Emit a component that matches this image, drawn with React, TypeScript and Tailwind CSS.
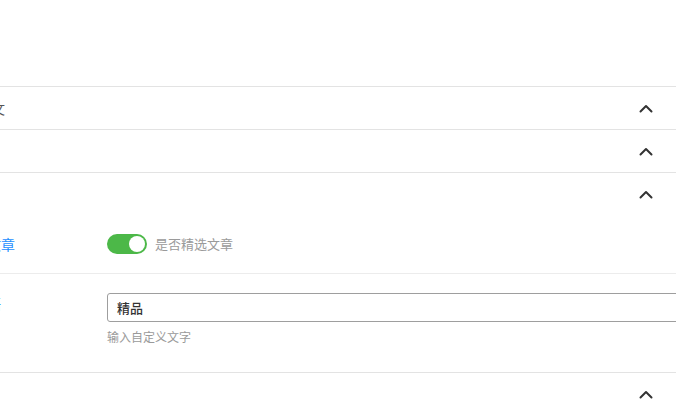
import React from "react";

const font = { fontFamily: '"Noto Sans CJK SC", "Noto Sans", sans-serif' };

function Chevron() {
  return (
    <svg width="14" height="9" viewBox="0 0 14 9" fill="none">
      <polyline
        points="1.5,7.5 7,2 12.5,7.5"
        stroke="#333"
        strokeWidth="2"
        strokeLinecap="round"
        strokeLinejoin="round"
      />
    </svg>
  );
}

function PanelHeader({ title }: { title: string }) {
  return (
    <div className="flex h-[42px] items-center justify-between pl-[9px] pr-[23px]">
      <span className="text-[14px] text-[#555]">{title}</span>
      <Chevron />
    </div>
  );
}

export default function App() {
  return (
    <div className="h-[418px] w-[676px] overflow-hidden bg-white" style={font}>
      <div className="-ml-[60px] w-[736px]">
        <div className="h-[86px]" />

        {/* Panel 1 */}
        <div className="border-t border-[#e3e3e3]">
          <PanelHeader title="文章正文" />
        </div>

        {/* Panel 2 */}
        <div className="border-t border-[#e3e3e3]">
          <PanelHeader title="其他" />
        </div>

        {/* Panel 3 */}
        <div className="border-t border-[#e3e3e3]">
          <PanelHeader title="高级" />
          <div className="h-[157px]">
            <div className="flex h-[58px] items-center pl-[19px]">
              <div className="w-[148px] shrink-0 text-[14px] text-[#1e8fff]">精选文章</div>
              <div className="flex items-center gap-2">
                <div className="flex h-[20px] w-[40px] items-center justify-end rounded-full bg-[#4cb848] px-[2px]">
                  <div className="h-[16px] w-[16px] rounded-full bg-white" />
                </div>
                <span className="text-[13px] text-[#9a9a9a]">是否精选文章</span>
              </div>
            </div>
            <div className="border-t border-[#ececec]" />
            <div className="flex pl-[19px] pt-[19px]">
              <div className="w-[148px] shrink-0 text-[14px] leading-[20px] text-[#1e8fff]">角标语</div>
              <div className="min-w-0 flex-1">
                <div className="flex h-[29px] w-[640px] items-center rounded-[3px] border border-[#9e9e9e] px-[9px] text-[13px] font-medium text-[#333]">
                  精品
                </div>
                <div className="mt-[6px] text-[12px] text-[#9a9a9a]">输入自定义文字</div>
              </div>
            </div>
          </div>
        </div>

        {/* Panel 4 */}
        <div className="border-t border-[#e3e3e3]">
          <PanelHeader title="附加" />
        </div>
      </div>
    </div>
  );
}
